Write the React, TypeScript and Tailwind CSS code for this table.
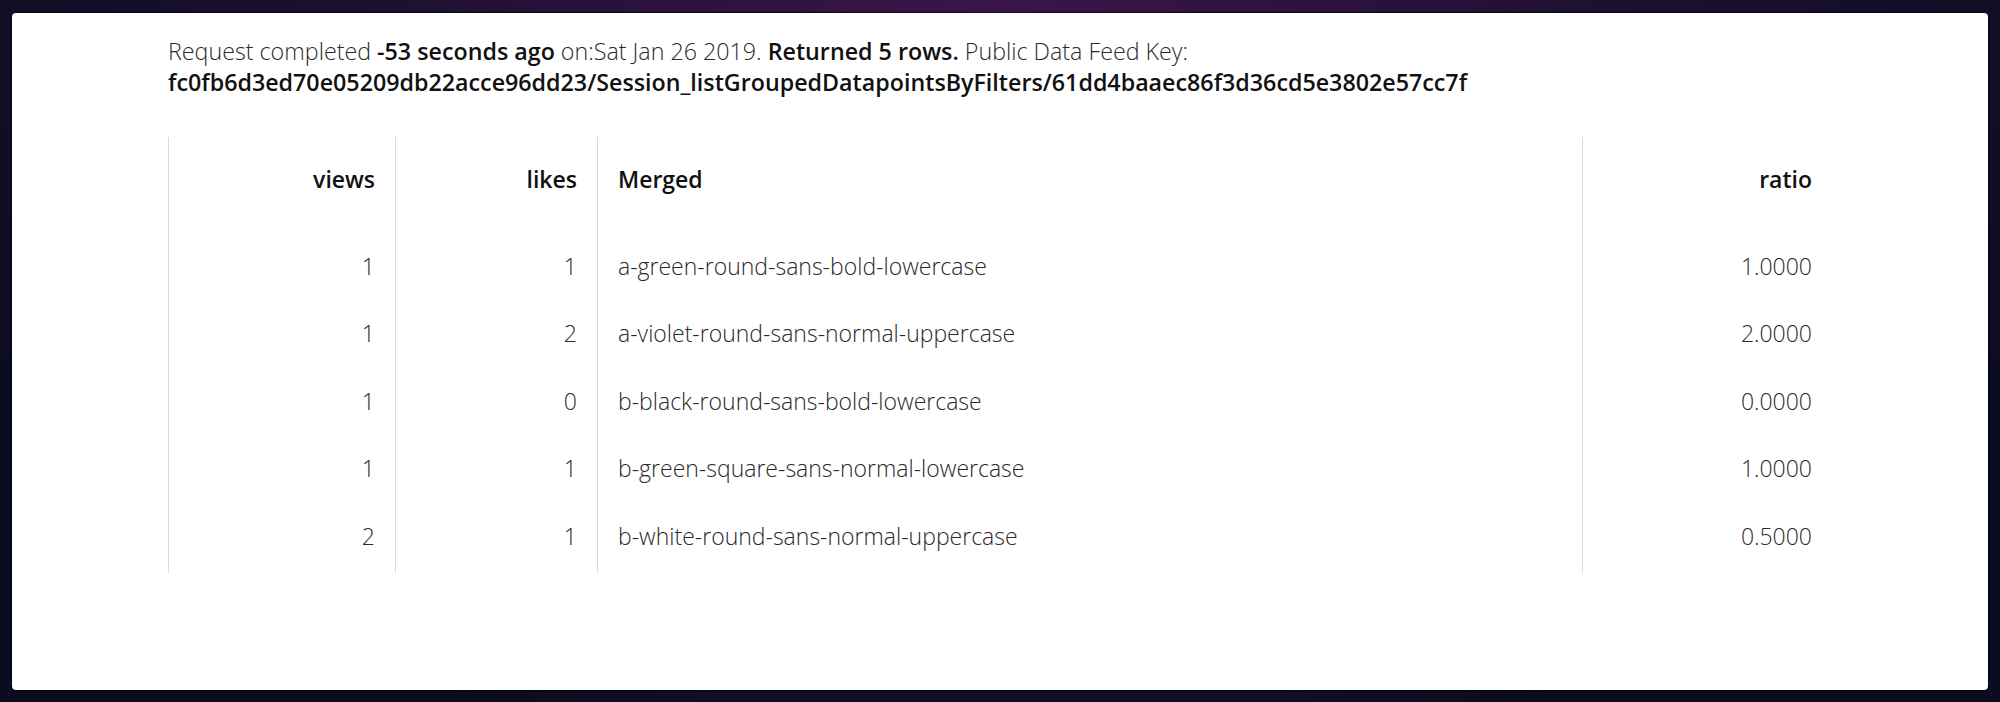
import * as React from "react";

const rows = [
  { views: 1, likes: 1, merged: "a-green-round-sans-bold-lowercase", ratio: "1.0000" },
  { views: 1, likes: 2, merged: "a-violet-round-sans-normal-uppercase", ratio: "2.0000" },
  { views: 1, likes: 0, merged: "b-black-round-sans-bold-lowercase", ratio: "0.0000" },
  { views: 1, likes: 1, merged: "b-green-square-sans-normal-lowercase", ratio: "1.0000" },
  { views: 2, likes: 1, merged: "b-white-round-sans-normal-uppercase", ratio: "0.5000" },
];

export default function App() {
  return (
    <div className="h-[702px] flex flex-col px-3 pt-[13px] pb-3 bg-[radial-gradient(ellipse_at_top,#3b1549_0%,#1c1030_45%,#0c0c20_80%)] font-['Open_Sans',sans-serif]">
      <div className="flex-1 rounded-[4px] bg-white shadow-[0_0_0_1px_rgba(0,0,0,0.6)] px-[156px] pt-[23px]">
        <p className="text-[23.25px] leading-[31px] font-light text-[#2a2a2a]">
          Request completed <b className="font-semibold text-[#111]">-53 seconds ago</b> on:Sat Jan 26 2019.{" "}
          <b className="font-semibold text-[#111]">Returned 5 rows.</b> Public Data Feed Key:{" "}
          <b className="font-semibold text-[#111]">
            fc0fb6d3ed70e05209db22acce96dd23/Session_listGroupedDatapointsByFilters/61dd4baaec86f3d36cd5e3802e57cc7f
          </b>
        </p>
        <table className="w-full mt-[39px] text-[23px] leading-[27.6px] border-collapse">
          <colgroup>
            <col className="w-[227px]" />
            <col className="w-[202px]" />
            <col />
            <col className="w-[250px]" />
          </colgroup>
          <thead>
            <tr className="text-[#111]">
              <Th className="text-right">views</Th>
              <Th className="text-right">likes</Th>
              <Th className="text-left">Merged</Th>
              <Th className="text-right">ratio</Th>
            </tr>
          </thead>
          <tbody>
            {rows.map((r, idx) => (
              <tr key={idx} className="font-light text-[#2a2a2a]">
                <Td className="text-right">{r.views}</Td>
                <Td className="text-right">{r.likes}</Td>
                <Td className="text-left">{r.merged}</Td>
                <Td className="text-right">{r.ratio}</Td>
              </tr>
            ))}
          </tbody>
        </table>
      </div>
    </div>
  );
}

function Th({ children, className }: { children: React.ReactNode; className: string }) {
  return <th className={"border-l border-[#dadada] px-5 pt-[29px] pb-[41px] font-semibold " + className}>{children}</th>;
}
function Td({ children, className }: { children: React.ReactNode; className: string }) {
  return <td className={"border-l border-[#dadada] px-5 pt-[18px] pb-[22px] " + className}>{children}</td>;
}
